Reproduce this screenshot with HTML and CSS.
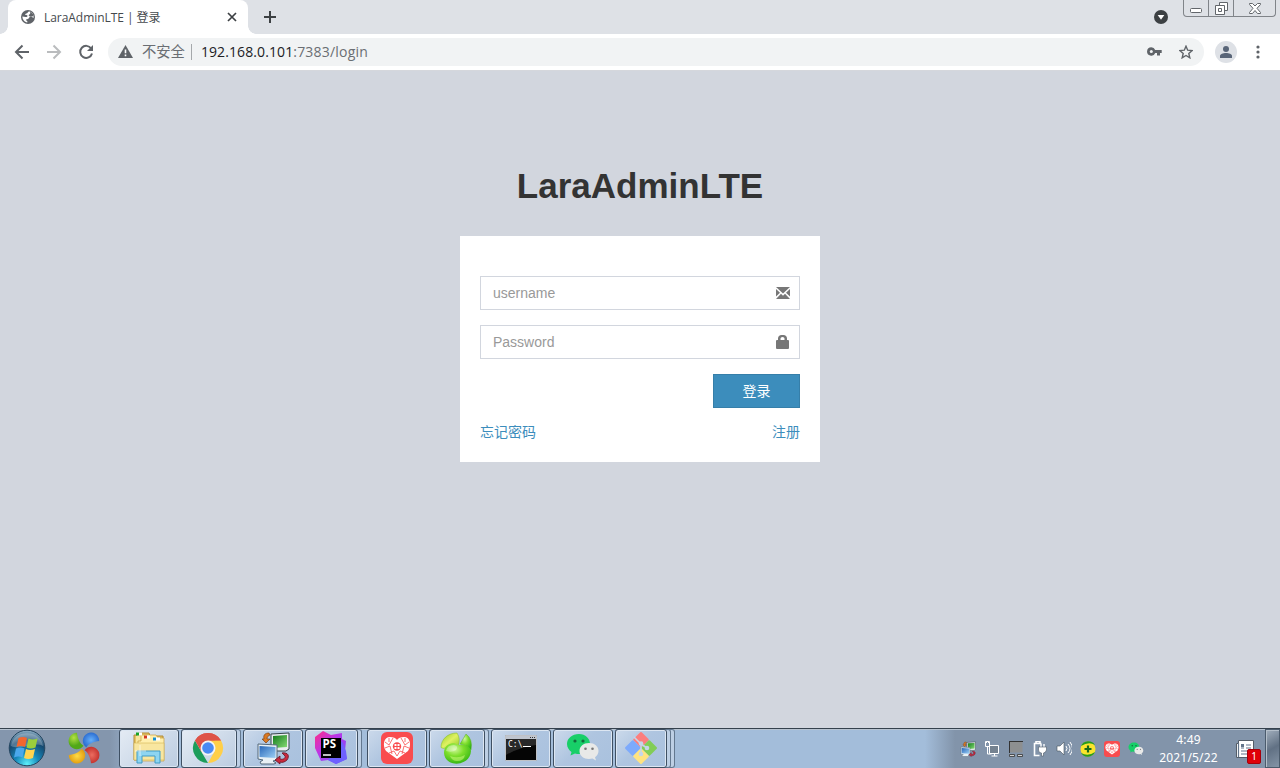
FILE: index.html
```html
<!DOCTYPE html>
<html lang="zh-CN">
<head>
<meta charset="utf-8">
<title>LaraAdminLTE | 登录</title>
<link rel="stylesheet" href="styles.css">
</head>
<body>
<svg width="0" height="0" class="defs">
  <defs>
    <radialGradient id="green" cx=".35" cy=".3"><stop stop-color="#b4e043"/><stop offset="1" stop-color="#51a818"/></radialGradient>
    <radialGradient id="lime" cx=".4" cy=".3" r=".8"><stop stop-color="#d0f69a"/><stop offset=".4" stop-color="#7fdf2d"/><stop offset="1" stop-color="#24ad0e"/></radialGradient>
    <linearGradient id="leaf" x2="1" y2="1"><stop stop-color="#94cc22"/><stop offset=".5" stop-color="#dff163"/><stop offset="1" stop-color="#8ccb24"/></linearGradient>
    <radialGradient id="blue"><stop stop-color="#66b0fa"/><stop offset="1" stop-color="#2c6ed2"/></radialGradient>
    <radialGradient id="yellow"><stop stop-color="#ffdb45"/><stop offset="1" stop-color="#e3a013"/></radialGradient>
    <radialGradient id="red"><stop stop-color="#ec6d60"/><stop offset="1" stop-color="#c5332e"/></radialGradient>
    <linearGradient id="screen" x2="1" y2="1"><stop stop-color="#2866b8"/><stop offset="1" stop-color="#9dd0f5"/></linearGradient>
    <linearGradient id="screen2" x2="1" y2="1"><stop stop-color="#127a1c"/><stop offset="1" stop-color="#86dc74"/></linearGradient>
    <radialGradient id="orb" cy=".95" r=".95"><stop stop-color="#5ff0fa"/><stop offset=".35" stop-color="#1689bb"/><stop offset=".7" stop-color="#16486f"/><stop offset="1" stop-color="#8fb0c6"/></radialGradient>
    <linearGradient id="storm" x2="1" y2="1"><stop stop-color="#ff2e86"/><stop offset=".4" stop-color="#bb36e8"/><stop offset="1" stop-color="#6b57ff"/></linearGradient>
    <symbol id="wechat" viewBox="0 0 34 30">
      <path fill="#18cf68" d="M13 1C6 1 1 5.500 1 11c0 3.500 2 6 4.500 8L4.500 22.500 9 20.500c8 2 15-2 15-9.500C24 5.500 19.500 1 13 1z"/>
      <circle cx="9" cy="8" r="1.600" fill="#126b3c"/><circle cx="17" cy="8" r="1.600" fill="#126b3c"/>
      <path fill="#e8e9e8" d="M23 10c-5.500 0-9.500 3.500-9.500 8s4 8 9.500 8c1.200 0 2.500-.2 3.500-.5l3.500 2-1-3.300c2.200-1.500 3.500-3.700 3.500-6.200C32.500 13.500 28.500 10 23 10z"/>
      <circle cx="19.500" cy="15.700" r="1.300" fill="#777"/><circle cx="26.500" cy="15.700" r="1.300" fill="#777"/>
    </symbol>
    <symbol id="heart" viewBox="0 0 32 32">
      <rect width="32" height="32" rx="6" fill="#f94c4e"/>
      <path d="M16 27 5 19C1 13 3 5 9 5c3 0 6 1 7 3 1-2 4-3 7-3 6 0 8 8 4 14z" fill="#fff"/>
      <path d="M4 10l4 3 4-7m16 4-4 3-4-7M4 16l5-2 2 8m17-6-5-2-2 8M8 21l5-2 3 5 3-5 5 2M8 6v4M24 6v4" fill="none" stroke="#f94c4e" stroke-width=".8"/>
      <circle cx="16" cy="14.500" r="4.200" fill="#f94c4e"/><path d="M13.500 12h2v2h-2zM16.500 12h2v2h-2zM13.500 15h2v2h-2zM16.500 15h2v2h-2z" fill="#fff"/>
    </symbol>
    <symbol id="remote" viewBox="0 0 34 34">
      <path d="M15 3l18-1v16l-3 2H15z" fill="#e9edf0" stroke="#34444b"/><path d="M17 5l14-1v12l-14 1z" fill="url(#screen2)"/>
      <path d="M2 13l19 1v15l-4 1 3 2-2 1H5l-1-2 3-2-5-1z" fill="#e8f0f5" stroke="#55697b"/><path d="M3.500 15l16 1v11l-16-1z" fill="url(#screen)"/>
      <path d="M13 2C9 2 7 4 8 8H6l4 4 4-4h-3c0-2 1-3 3-4z" fill="#d97822" stroke="#713405" stroke-width=".6"/>
      <path d="M26 22c6-1 8 3 5 7-2 2-5 3-7 2v2l-5-4 5-4v3c3 1 6-1 5-3z" fill="#c8293d" stroke="#641426" stroke-width=".8"/>
    </symbol>
  </defs>
</svg>

<div class="screen">
  <header class="tabstrip">
    <div class="tab">
      <svg class="globe" width="14" height="14" viewBox="0 0 14 14"><circle cx="7" cy="7" r="7" fill="#5f6368"/><path d="M8 1.500C6.800 1.800 7 2.800 6 3.300c-.8.500-1.800.3-1.700 1.200.1.800 1.900.2 2.200 1.300.2 1-1 1.300-1.900 1.200L1.400 6.500C1.400 9.500 3.500 12 6.300 12.500V11c-1 0-1.300-.8-1-1.700C6.600 9 8 8.500 8.300 7.400c.3-1.200 1-.9 2-.9l2.200 1.500c.6-3-1.200-5.800-4-6.500z" fill="#fff"/><path d="M9.200 1.500v2.200L7.500 5.200 9 6.400h2.500L12.700 5z" fill="#5f6368"/></svg>
      <span class="tab-title">LaraAdminLTE | 登录</span>
      <svg width="10" height="10" viewBox="0 0 10 10"><path d="m1 1 8 8m0-8-8 8" stroke="#3c4043" stroke-width="1.700"/></svg>
    </div>
    <svg class="new-tab" width="12" height="12" viewBox="0 0 12 12"><path d="M6 0v12M0 6h12" stroke="#3c4043" stroke-width="2"/></svg>
    <svg class="tab-search" width="14" height="14" viewBox="0 0 14 14"><circle cx="7" cy="7" r="7" fill="#3c4043"/><path d="M3.700 5h6.600L7 9.700z" fill="#fff"/></svg>
    <div class="window-buttons">
      <span class="minimize"><svg width="12" height="5" viewBox="0 0 12 5"><rect x=".5" y=".5" width="11" height="4" rx="1" fill="#fff" stroke="#62666b"/></svg></span>
      <span class="restore"><svg width="13" height="13" viewBox="0 0 13 13"><path d="M4.500.5h8v8h-8z" fill="#fff" stroke="#62666b"/><path d="M.5 3.500h9v9h-9zM3.500 6.500h3v3h-3z" fill="#fff" stroke="#62666b"/></svg></span>
      <span class="close"><svg width="12" height="11" viewBox="0 0 12 11"><path d="M.5.500h3L6 3l2.500-2.500h3v1L8 5.300l3.500 4.200v1h-3L6 7.500l-2.500 3h-3v-1L4 5.300.5 1.500z" fill="#fff" stroke="#62666b"/></svg></span>
    </div>
  </header>

  <nav class="toolbar">
    <svg width="16" height="16" viewBox="0 0 16 16"><path d="M15 8H2m6.500-6.500L2 8l6.500 6.500" fill="none" stroke="#5f6368" stroke-width="2"/></svg>
    <svg width="16" height="16" viewBox="0 0 16 16"><path d="M1 8h13M7.500 1.500 14 8l-6.500 6.500" fill="none" stroke="#babcbe" stroke-width="2"/></svg>
    <svg width="16" height="16" viewBox="0 0 16 16"><path d="M13.200 4.500A6 6 0 1 0 14 9.500" fill="none" stroke="#5f6368" stroke-width="2"/><path d="M15 1v6H9z" fill="#5f6368"/></svg>
    <div class="address">
      <svg width="15" height="13" viewBox="0 0 15 13"><path d="M7.500 0 15 13H0z" fill="#5f6368"/><path d="M7.500 4.500v3.700m0 1.300v1.800" stroke="#fff" stroke-width="1.600"/></svg>
      <span class="insecure">不安全</span>
      <span class="url"><b>192.168.0.101</b>:7383/login</span>
      <svg class="key" width="15" height="9" viewBox="0 0 15 9"><path d="M4.300.3a4.200 4.200 0 1 0 3.900 5.700H10v2.500h3V6h1.700V3H8.200A4.200 4.200 0 0 0 4.300.3z" fill="#5f6368"/><circle cx="4.300" cy="4.500" r="1.500" fill="#f1f3f4"/></svg>
      <svg width="14" height="14" viewBox="0 0 14 14"><path d="m7 1.200 1.700 4 4.400.4L9.800 8.500l1 4.300L7 10.500l-3.800 2.300 1-4.300L.9 5.600l4.400-.4z" fill="none" stroke="#5f6368" stroke-width="1.400"/></svg>
    </div>
    <span class="avatar"><svg width="12" height="12" viewBox="0 0 12 12" fill="#596578"><circle cx="6" cy="3" r="3"/><path d="M0 12v-2c0-2 3-3 6-3s6 1 6 3v2z"/></svg></span>
    <svg class="more" width="4" height="14" viewBox="0 0 4 14" fill="#5f6368"><circle cx="2" cy="2" r="1.600"/><circle cx="2" cy="7" r="1.600"/><circle cx="2" cy="12" r="1.600"/></svg>
  </nav>

  <main class="login-page">
    <h1>LaraAdminLTE</h1>
    <form class="login-box">
      <label class="field"><input type="text" placeholder="username"><svg width="14" height="12" viewBox="0 0 14 12"><path d="M0 0h14L7 6.500zM0 2l4 3.700L0 9.500zM14 2l-4 3.700 4 3.800zM5 6.800l2 2 2-2 5 5.200H0z" fill="#777"/></svg></label>
      <label class="field"><input type="password" placeholder="Password"><svg width="14" height="14" viewBox="0 0 14 14"><path d="M0 6q0-1 1-1h1V3.500C2 1.500 3.500 0 5.500 0h2C9.500 0 11 1.500 11 3.500V5h1q1 0 1 1v7q0 1-1 1H1q-1 0-1-1zM4.500 5h4V3.500Q8.500 2 6.500 2t-2 1.500z" fill="#777"/></svg></label>
      <button type="button">登录</button>
      <div class="links"><a>忘记密码</a><a>注册</a></div>
    </form>
  </main>

  <footer class="taskbar">
    <div class="launch start">
      <svg width="38" height="38" viewBox="0 0 38 38"><circle cx="19" cy="19" r="17.800" fill="url(#orb)" stroke="#24455f"/><path d="M3 17C5 0 33 0 35 17 25 12 14 22 3 17z" fill="#fff" opacity=".25"/><path d="M10.500 9q4.500-2 8.500 0l-2 9q-4-2-8.500 0z" fill="#f2672f"/><path d="M20.500 9.500q4 2 9 0l-2 9q-5 2-9 0z" fill="#9bcf3c"/><path d="M8 19.500q4.500-2 8.500 0l-2 9q-4-2-8.500 0z" fill="#4aa8ec"/><path d="M18 20q4 2 9 0l-2 9q-5 2-9 0z" fill="#ffd450"/></svg>
    </div>
    <div class="launch colors">
      <svg width="32" height="32" viewBox="0 0 32 32"><path d="M9 .8A8.200 8.200 0 1 0 15.500 13.700C12 12 9.500 6 9 .8z" fill="url(#green)"/><path transform="rotate(90 16 16)" d="M9 .8A8.200 8.200 0 1 0 15.500 13.700C12 12 9.500 6 9 .8z" fill="url(#blue)"/><path transform="rotate(180 16 16)" d="M9 .8A8.200 8.200 0 1 0 15.500 13.700C12 12 9.500 6 9 .8z" fill="url(#red)"/><path transform="rotate(270 16 16)" d="M9 .8A8.200 8.200 0 1 0 15.500 13.700C12 12 9.500 6 9 .8z" fill="url(#yellow)"/></svg>
    </div>
    <div class="task wide active">
      <svg width="34" height="32" viewBox="0 0 34 32"><path d="M2 3h4l1-2h10l1 3h13v24H2z" fill="#e5c564" stroke="#b28a35"/><path d="M4 4h14l1 2h13v21H4z" fill="#f8e59b"/><path d="M9 3h15l2 3h6v23H6V9h3z" fill="#ffefad" stroke="#c69d44" stroke-width=".7"/><path d="M5 2h5M13 5h5M22 7h6" stroke="#fff" stroke-width="3"/><path d="M4 2h3" stroke="#17a327" stroke-width="3"/><path d="M12 5h3" stroke="#d33822" stroke-width="3"/><path d="M21 7h3" stroke="#168fd0" stroke-width="3"/><path d="M2 11h30v17H2z" fill="#f8e6a0" stroke="#d3b556" stroke-width=".6"/><path d="M5 31V19h23v12h-5v-7H10v7z" fill="#8ed5f1" stroke="#419bc6"/><path d="M8 13v11M3 19h11" stroke="#fff" stroke-width=".8" opacity=".8"/></svg>
    </div>
    <div class="stack chrome">
      <div class="task active"><svg width="32" height="32" viewBox="0 0 32 32"><path d="M16 16 3 8.500A15 15 0 0 1 29 8.500z" fill="#de5247"/><path d="M3 8.500 9.500 20 16 31A15 15 0 0 1 3 8.500z" fill="#1c9d5a"/><path d="M16 31l6.500-11.500V8.500H29A15 15 0 0 1 16 31z" fill="#ffcf49"/><path d="M16 8.500h13L22 20l-6-4z" fill="#ffcf49"/><path d="M3 8.500 9.500 20 16 16V8.500h13A15 15 0 0 0 3 8.500z" fill="#de5247"/><circle cx="16" cy="16" r="7.500" fill="#f4f4f4"/><circle cx="16" cy="16" r="5.800" fill="#4a8af4"/></svg></div>
    </div>
    <div class="task wide"><svg width="34" height="34"><use href="#remote"/></svg></div>
    <div class="stack storm">
      <div class="task"><svg width="32" height="34" viewBox="0 0 32 34"><path d="M0 6 8 0l8 4 11-2v6l4 2-1 10 2 8-11 5-8-4-7 1L0 17z" fill="url(#storm)"/><path d="M27 10l4 10 1 8-11 5-8-4z" fill="#6e61ff"/><path d="M6 7h20v20H6z"/><path d="M8 24h8" stroke="#fff" stroke-width="1.500"/><text x="7.500" y="17" class="ps">PS</text></svg></div>
    </div>
    <div class="task wide"><svg width="32" height="32"><use href="#heart"/></svg></div>
    <div class="stack plant">
      <div class="task"><svg width="34" height="32" viewBox="0 0 34 32"><path d="M2 15.500C2 7 9 1 18 1q4 6 1 13-8-1-12 2-3 1-5-.5z" fill="url(#leaf)" stroke="#7db827" stroke-width=".5"/><path d="M21 12 27 2q7 5 5 16-4-5-11-6z" fill="url(#lime)" stroke="#61aa35" stroke-width=".5"/><path d="M5 21c0-9 9-12 14-8 8-1 13 2 13 6-1 16-26 17-27 2z" fill="url(#lime)"/><path d="M7 19q1-6 8-6 5 1 2 5-4 3-10 1z" fill="#fff" opacity=".35"/><path d="M11 24q8 3 15-1-1 6-8 6-5 0-7-5z" fill="#d5ff80" opacity=".5"/></svg></div>
    </div>
    <div class="task wide"><svg width="32" height="26" viewBox="0 0 32 26"><path fill="#050505" stroke="#bfc1c5" d="M.5.500h31v25H.5z"/><path fill="#bfc5cf" d="M1 1h30v3H1z"/><path d="M1 4h30v6Q15 12 1 20z" fill="#fff" opacity=".14"/><path d="M25 2.500h1m1 0h1m1 0h1" stroke="#333"/><text x="3" y="12" class="console">C:\</text><path d="M18 11.500h8" stroke="#fff"/></svg></div>
    <div class="task wide"><svg width="34" height="30"><use href="#wechat"/></svg></div>
    <div class="stack triple">
      <div class="stack inner"><div class="task"><svg width="34" height="34" viewBox="0 0 34 34"><rect x="11.200" y="3" width="11.600" height="11.600" rx="1" transform="rotate(45 17 8.800)" fill="#fc7e7e"/><rect x="3" y="11.200" width="11.600" height="11.600" rx="1" transform="rotate(45 8.800 17)" fill="#7daafc"/><rect x="19.400" y="11.200" width="11.600" height="11.600" rx="1" transform="rotate(45 25.200 17)" fill="#82cd57"/><rect x="11.200" y="19.400" width="11.600" height="11.600" rx="1" transform="rotate(45 17 25.200)" fill="#ffe381"/><path d="m10 6 7 7v11m0-11 6 4" fill="none" stroke="#c4d6e9" stroke-width="1.600"/><g fill="#c4d6e9"><circle cx="17" cy="12.500" r="2.300"/><circle cx="17" cy="23" r="2.300"/><circle cx="23" cy="17" r="2.300"/></g></svg></div></div>
    </div>
    <div class="tray">
      <svg width="16" height="16"><use href="#remote"/></svg>
      <svg width="16" height="16" viewBox="0 0 16 16"><path d="M5.500 4.500h9v8h-9z" fill="#758290" stroke="#fff"/><path d="M1.500.500h4v5h-4zM3.500 5v8h4m0 2h6m-3-2v2M2.500 0v2m2-2v2" fill="none" stroke="#fff"/></svg>
      <svg width="16" height="16" viewBox="0 0 16 16"><path d="M1.500.500h13v11h-13z" fill="#8d8f90"/><path d="M1 .5h14M1.500 0v12" stroke="#333"/><path d="M1.500 13.500h5v2h-5zM9.500 13.500h5v2h-5z" fill="#d3d3d3" stroke="#333" stroke-width=".8"/></svg>
      <svg width="16" height="16" viewBox="0 0 16 16"><path d="M7.500 14.500h-5V2.500h7M4 2V.500h4V2" fill="none" stroke="#fff" stroke-width="1.600"/><path d="M9 3v3m3-3v3" stroke="#fff" stroke-width="1.400"/><path d="M6.500 6h8v3q-1 3-3 3v3h-2v-3q-3 0-3-3z" fill="#fff" stroke="#4c5967" stroke-width=".6"/></svg>
      <svg width="16" height="16" viewBox="0 0 16 16"><path d="M1 5h3l4-4v13l-4-4H1z" fill="#fff" stroke="#45515d" stroke-width=".6"/><path d="M10 5q2 2.500 0 5m2-7q4 4.500 0 9m2-11q5 6.500 0 13" fill="none" stroke="#fff"/></svg>
      <svg width="16" height="16" viewBox="0 0 16 16"><circle cx="8" cy="8" r="7.500" fill="#fae52c"/><path d="M1 5A8 8 0 0 1 15 4Q9 0 1 5M15 11A8 8 0 0 1 1 12q7 4 14-1" fill="#279b20"/><path d="M8 4.500v7M4.500 8h7" stroke="#186b19" stroke-width="2.200"/></svg>
      <svg width="16" height="16"><use href="#heart"/></svg>
      <svg width="16" height="16"><use href="#wechat"/></svg>
    </div>
    <div class="clock"><span>4:49</span><span>2021/5/22</span></div>
    <div class="notice"><svg width="20" height="19" viewBox="0 0 20 19"><path d="M3.500.500h15v17H1.500V3.500h2z" fill="#fff" stroke="#545d68"/><path d="M3.500 3v14M6 8h3m2 0h5M6 11h10M6 14h6M11 5h5" stroke="#63758a" stroke-width="1.200"/><path d="M6 4h3v3H6z" fill="#63758a"/></svg><span>1</span></div>
    <div class="show-desktop"></div>
  </footer>
</div>
</body>
</html>
```
FILE: styles.css
```css
* { box-sizing: border-box; }
body { margin: 0; overflow: hidden; }
.defs { position: absolute; }
svg { display: block; flex: none; }
.screen {
  width: 1280px; height: 768px; display: flex; flex-direction: column;
  font-family: "Liberation Sans", "Noto Sans CJK SC", sans-serif;
}

.tabstrip { height: 34px; flex: none; display: flex; background: #dee1e6; padding-left: 8px; }
.tab {
  position: relative;
  width: 240px; display: flex; align-items: center; padding: 0 11px 0 13px;
  background: #fff; border-radius: 8px 8px 0 0;
  font: 12px "Open Sans", "Noto Sans CJK SC", sans-serif; color: #45494d;
}
.tab::before, .tab::after { content: ""; position: absolute; bottom: 0; width: 8px; height: 8px; }
.tab::before { left: -8px; background: radial-gradient(circle at 0 0, #dee1e6 7.500px, #fff 8px); }
.tab::after { right: -8px; background: radial-gradient(circle at 100% 0, #dee1e6 7.500px, #fff 8px); }
.tab-title { margin: 0 auto 0 9px; white-space: nowrap; letter-spacing: -.05px; }
.new-tab { margin: 11px 0 0 16px; }
.tab-search { margin: 10px 15px 0 auto; }
.window-buttons {
  width: 93px; height: 17px; margin-right: 4px; display: flex;
  border: 1px solid #808489; border-top: 0; border-radius: 0 0 4px 4px;
}
.window-buttons span { display: flex; align-items: center; justify-content: center; border-right: 1px solid #808489; }
.minimize { width: 25px; padding-top: 5px; }
.restore { width: 25px; }
.window-buttons .close { flex: 1; border: 0; }

.toolbar {
  height: 37px; flex: none; display: flex; align-items: center; gap: 16px;
  padding: 0 20px 1px 14px; border-bottom: 1px solid #d5d7dc; background: #fff;
}
.address {
  height: 28px; width: 1096px; margin-left: -2px; display: flex; align-items: center;
  padding: 0 11px 0 10px; background: #f1f3f4; border-radius: 14px;
  font: 14px "Open Sans", "Noto Sans CJK SC", sans-serif; color: #6a6e73;
}
.insecure { margin-left: 9px; padding-right: 6px; border-right: 1px solid #a5a8ab; line-height: 16px; font-size: 14.3px; }
.url { margin: 0 auto 0 9px; letter-spacing: .2px; }
.url b { font-weight: 400; color: #202124; letter-spacing: .1px; }
.key { margin-right: 17px; }
.avatar { width: 22px; height: 22px; margin-left: -5px; flex: none; display: grid; place-items: center; border-radius: 50%; background: #dee1e6; }
.more { margin-left: 3px; }

.login-page { flex: 1; display: flex; flex-direction: column; align-items: center; background: #d2d6de; padding-top: 90px; }
h1 { margin: 0 0 25px; font-size: 35px; line-height: 50px; font-weight: 700; color: #333; }
.login-box { width: 360px; height: 226px; background: #fff; padding: 40px 20px 20px; display: flex; flex-direction: column; }
.field { height: 34px; display: flex; align-items: center; margin-bottom: 15px; padding: 0 9px 0 12px; border: 1px solid #d2d6de; }
.field input { flex: 1; min-width: 0; padding: 0; border: 0; outline: 0; background: transparent; font: 14px "Liberation Sans", sans-serif; }
.field input::placeholder { color: #999; opacity: 1; }
button {
  width: 87px; height: 34px; align-self: flex-end; padding: 0 0 2px;
  border: 1px solid #367fa9; background: #3c8dbc; color: #fff;
  font: 14px "Liberation Sans", "Noto Sans CJK SC", sans-serif;
}
.links { display: flex; justify-content: space-between; margin-top: 14px; line-height: 20px; font-size: 14px; color: #3c8dbc; }

.taskbar {
  height: 40px; flex: none; display: flex; border-top: 1px solid #35414d; box-shadow: inset 0 1px #b7c3d0;
  background: linear-gradient(90deg, #8496ad 0 110px, #a3bdda 145px, #a3bdda 925px, #8294aa 955px);
}
.launch { display: grid; place-items: center; flex: none; }
.launch svg { position: relative; top: -1px; }
.start { width: 54px; }
.colors { width: 60px; margin-right: 5px; }
.task {
  height: 39px; flex: none; display: grid; place-items: center;
  border: 1px solid #3f5063; border-radius: 3px;
  background: linear-gradient(135deg, #ccdaeb, #afc5e0 45%, #a9c1de);
  box-shadow: inset 0 0 0 1px #dce6f2;
}
.task svg { position: relative; top: -1px; }
.task.active { background: linear-gradient(135deg, #e4ebf4, #bbcce0); }
.task.wide { width: 60px; margin-right: 2px; }
.stack { flex: none; border: 1px solid #63788f; border-left: 0; border-radius: 3px; background: #bdcfe4; }
.stack .task { margin-top: -1px; }
.chrome { width: 60px; margin-right: 2px; }
.chrome .task { width: 56px; }
.chrome svg { left: -1px; }
.storm { width: 57px; margin-right: 5px; }
.storm .task { width: 53px; }
.storm svg { left: -1px; }
.plant { width: 60px; margin-right: 2px; }
.plant .task { width: 56px; }
.plant svg { left: -1px; }
.triple { width: 60px; }
.triple .inner { width: 56px; height: 39px; margin-top: -1px; }
.triple .task { width: 52px; }
.ps { font: bold 11.500px "Open Sans", sans-serif; fill: #fff; }
.console { font: 8px "DejaVu Sans Mono", monospace; fill: #fff; }

.tray { margin: 12px 0 0 auto; display: flex; gap: 8px; }
.clock {
  width: 61px; margin: 2px 0 0 14px; display: flex; flex-direction: column; align-items: center;
  font: 12px/18px "Noto Sans", sans-serif; color: #fff; letter-spacing: .15px;
}
.notice { position: relative; width: 27px; margin: 11px 3px 0 16px; }
.notice span {
  position: absolute; left: 12px; top: 9px; width: 14px; height: 15px;
  background: #df0008; border: 1px solid #a5000b; border-radius: 2px;
  color: #fff; font: 10px/13px "Noto Sans", sans-serif; text-align: center;
}
.show-desktop { width: 15px; border: 1px solid #4b5b6c; box-shadow: inset 1px 1px #b4bfca; background: linear-gradient(150deg, #a2afbd, #617184 50%, #8494a6); }
```
